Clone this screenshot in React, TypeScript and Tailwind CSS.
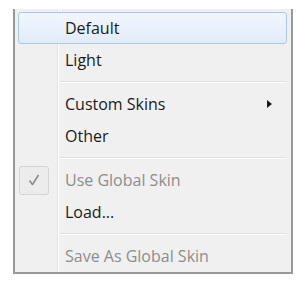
import React from 'react';

type Item = { label: string; disabled?: boolean; checked?: boolean; submenu?: boolean; active?: boolean } | 'sep';

const items: Item[] = [
  { label: 'Default', active: true },
  { label: 'Light' },
  'sep',
  { label: 'Custom Skins', submenu: true },
  { label: 'Other' },
  'sep',
  { label: 'Use Global Skin', disabled: true, checked: true },
  { label: 'Load...' },
  'sep',
  { label: 'Save As Global Skin', disabled: true },
];

function CheckBox() {
  return (
    <div className="w-[30px] h-[29px] rounded-[3px] border border-[#d4d4d4] bg-[#ececec] flex items-center justify-center">
      <svg width="14" height="14" viewBox="0 0 14 14">
        <path d="M2.5 7.5 L5.5 11.5 L11.5 2" fill="none" stroke="#8c8c8c" strokeWidth="1.6" strokeLinejoin="round" />
      </svg>
    </div>
  );
}

export default function App() {
  return (
    <div className="w-[298px] h-[288px] bg-white pt-[9px] pl-[13px]" style={{ fontFamily: '"Open Sans", "Noto Sans", sans-serif' }}>
      <div className="w-[280px] h-[265px] border-x-2 border-b-2 border-[#999999] pt-[3px] pl-[3px] pr-[4px] bg-[linear-gradient(to_right,#f0f0f0_42px,#e2e3e3_42px,#e2e3e3_43px,#ffffff_43px,#ffffff_44px,#f0f0f0_44px)]">
        {items.map((item, i) => {
          if (item === 'sep') {
            return (
              <div key={i} className="h-[12px] flex flex-col justify-center pl-[41px] pr-[1px]">
                <div className="h-px bg-[#e0e0e0]" />
                <div className="h-px bg-white" />
              </div>
            );
          }
          return (
            <div
              key={i}
              className={`h-[32px] flex items-center text-[16px] rounded-[3px] border ${
                item.active
                  ? 'border-[#a9c9ef] bg-[linear-gradient(to_bottom,rgba(242,247,254,0.85),rgba(222,235,251,0.85))]'
                  : 'border-transparent'
              } ${item.disabled ? 'text-[#8d8d8d]' : 'text-[#1b1b1b]'}`}
            >
              <div className="w-[46px] shrink-0 flex items-center">{item.checked && <CheckBox />}</div>
              <span className="flex-1">{item.label}</span>
              {item.submenu && (
                <svg width="5" height="8" viewBox="0 0 5 8" className="mr-[14px]">
                  <path d="M0 0 L5 4 L0 8 Z" fill="#1b1b1b" />
                </svg>
              )}
            </div>
          );
        })}
      </div>
    </div>
  );
}
